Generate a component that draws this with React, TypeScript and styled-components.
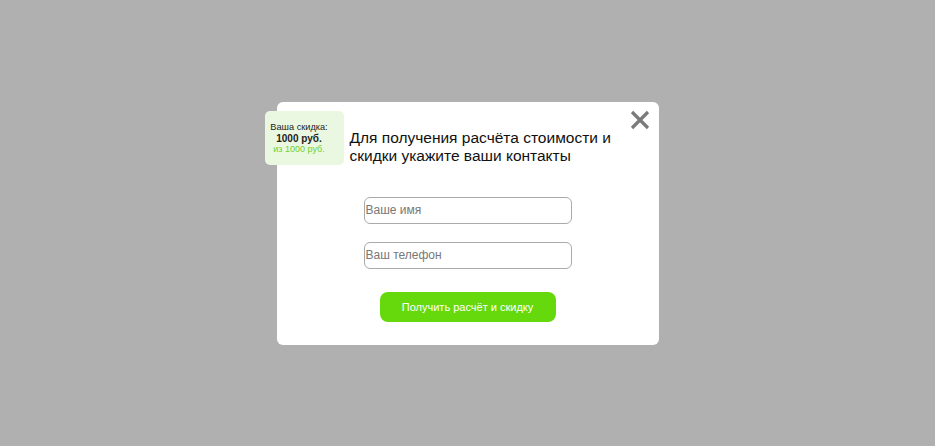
import React from 'react';
import styled, { createGlobalStyle } from 'styled-components';

const Global = createGlobalStyle`
	html, body {
		margin: 0;
		padding: 0;
		height: 100%;
		background: #b0b0b0;
		font-family: "Liberation Sans", Arial, sans-serif;
	}
	#root {
		height: 100%;
	}
`;

const Overlay = styled.div`
	height: 100vh;
	display: flex;
	align-items: center;
	justify-content: center;
`;

const Modal = styled.div`
	position: relative;
	width: 382px;
	height: 243px;
	box-sizing: border-box;
	background: #fff;
	border-radius: 6px;
	padding: 27px 0 0;
	display: flex;
	flex-direction: column;
	align-items: center;
`;

const Badge = styled.div`
	position: absolute;
	left: -12px;
	top: 9px;
	width: 79px;
	height: 54px;
	box-sizing: border-box;
	padding: 11px 10px 0 0;
	background: #eaf8e1;
	border-radius: 5px;
	display: flex;
	flex-direction: column;
	align-items: center;
	line-height: 11px;
`;

const BadgeLine = styled.span<{ $bold?: boolean; $green?: boolean }>`
	font-weight: ${(p) => (p.$bold ? 'bold' : 'normal')};
	color: ${(p) => (p.$green ? '#6fd12a' : '#222')};
	font-size: ${(p) => (p.$green ? '9px' : p.$bold ? '10px' : '9.2px')};
`;

const Close = styled.button`
	position: absolute;
	right: 9px;
	top: 8px;
	width: 20px;
	height: 20px;
	padding: 0;
	border: none;
	background: none;
	cursor: pointer;
`;

const Title = styled.h2`
	align-self: flex-start;
	margin: 0 0 32px 73px;
	width: 270px;
	font-size: 15.5px;
	line-height: 18px;
	font-weight: normal;
	color: #111;
`;

const Field = styled.input`
	width: 208px;
	height: 27px;
	box-sizing: border-box;
	border: 1.5px solid #aaaaaa;
	border-radius: 6px;
	padding: 0 1px;
	margin-bottom: 18px;
	font-family: inherit;
	font-size: 12px;
	color: #333;
	outline: none;

	&::placeholder {
		color: #777;
	}
`;

const Submit = styled.button`
	width: 176px;
	height: 30px;
	margin-top: 5px;
	border: none;
	border-radius: 8px;
	background: #66d90c;
	color: #fff;
	font-family: inherit;
	font-size: 11px;
	cursor: pointer;
`;

export default function App() {
	return (
		<>
			<Global />
			<Overlay>
				<Modal>
					<Badge>
						<BadgeLine>Ваша скидка:</BadgeLine>
						<BadgeLine $bold>1000 руб.</BadgeLine>
						<BadgeLine $green>из 1000 руб.</BadgeLine>
					</Badge>
					<Close aria-label="Закрыть">
						<svg width="20" height="20" viewBox="0 0 20 20">
							<path d="M2 2 L18 18 M18 2 L2 18" stroke="#7a7a7a" strokeWidth="3.2" />
						</svg>
					</Close>
					<Title>Для получения расчёта стоимости и скидки укажите ваши контакты</Title>
					<Field placeholder="Ваше имя" />
					<Field placeholder="Ваш телефон" />
					<Submit>Получить расчёт и скидку</Submit>
				</Modal>
			</Overlay>
		</>
	);
}
